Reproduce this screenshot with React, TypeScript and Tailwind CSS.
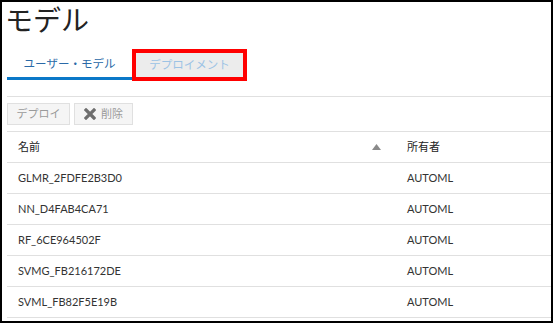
const rows = [
  "GLMR_2FDFE2B3D0",
  "NN_D4FAB4CA71",
  "RF_6CE964502F",
  "SVMG_FB216172DE",
  "SVML_FB82F5E19B",
];

export default function App() {
  return (
    <div className="w-[554px] h-[326px] bg-white">
      <div
        className="w-[553px] h-[323px] border-2 border-black overflow-hidden bg-white text-[#333]"
        style={{ fontFamily: '"Open Sans", "Noto Sans CJK JP", sans-serif' }}
      >
        {/* Title */}
        <h1 className="h-[42px] pl-[3px] text-[28px] leading-[36px] text-[#222] font-normal">
          モデル
        </h1>

        {/* Tabs */}
        <div className="flex items-end h-[36px] pl-[5px]">
          <div className="w-[125px] h-[34px] pt-[5px] flex items-center justify-center border-b-[3px] border-[#0a78c8] text-[11.5px] text-[#2a6aa8]">
            ユーザー・モデル
          </div>
          <div className="w-[115px] h-[32px] mb-[-1px] flex items-center justify-center bg-[#ececec] border-[4px] border-[#ff0000] text-[11.5px] text-[#9cc3e5]">
            デプロイメント
          </div>
        </div>

        <div className="ml-[5px] mt-[16px] border-t border-[#e0e0e0]" />

        {/* Toolbar */}
        <div className="flex gap-[4px] pl-[5px] pt-[6px] h-[34px]">
          <button className="h-[22px] w-[63px] bg-[#f5f5f5] border border-[#e0e0e0] text-[11px] text-[#9a9a9a]">
            デプロイ
          </button>
          <button className="h-[22px] w-[59px] flex items-center justify-center gap-[5px] bg-[#f5f5f5] border border-[#e0e0e0] text-[11px] text-[#9a9a9a]">
            <svg width="12" height="12" viewBox="0 0 12 12">
              <path d="M2 2 L10 10 M10 2 L2 10" stroke="#6e6e6e" strokeWidth="3.2" strokeLinecap="square" />
            </svg>
            削除
          </button>
        </div>

        {/* Table */}
        <div className="ml-[5px]" style={{ fontFamily: 'Lato, "Noto Sans CJK JP", sans-serif' }}>
          <div className="flex items-center h-[32px] border-t border-b border-[#e0e0e0] text-[11px] text-[#222]">
            <div className="w-[389px] pl-[11px] flex items-center justify-between pr-[15px]">
              <span>名前</span>
              <svg width="9" height="6" viewBox="0 0 9 6">
                <path d="M4.5 0 L9 6 L0 6 Z" fill="#8a8a8a" />
              </svg>
            </div>
            <div className="pl-[11px]">所有者</div>
          </div>
          {rows.map((r) => (
            <div
              key={r}
              className="flex items-center h-[31px] border-b border-[#e0e0e0] text-[11px] text-[#333]"
            >
              <div className="w-[389px] pl-[11px]">{r}</div>
              <div className="pl-[11px]">AUTOML</div>
            </div>
          ))}
        </div>
      </div>
    </div>
  );
}
